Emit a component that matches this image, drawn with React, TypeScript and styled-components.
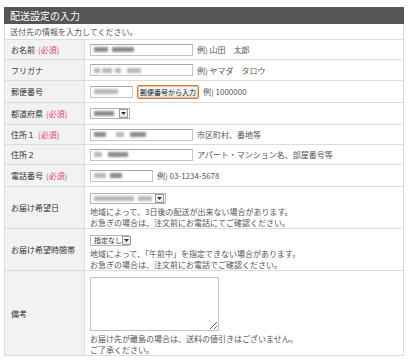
import styled, { createGlobalStyle } from "styled-components";

const GlobalStyle = createGlobalStyle`
  html, body {
    margin: 0;
    padding: 0;
    background: #fff;
  }
  body {
    font-family: "Noto Sans CJK JP", "Noto Sans", sans-serif;
    color: #444;
  }
`;

type Field = {
  label: string;
  required?: boolean;
  height: number;
};

const App: React.FC = () => {
  return (
    <>
      <GlobalStyle />
      <StyledPage>
        <StyledForm>
          <StyledTitle>配送設定の入力</StyledTitle>
          <StyledIntro>送付先の情報を入力してください。</StyledIntro>

          <Row label="お名前" required height={20}>
            <StyledInput $width={103}>
              <Blur $width={14} />
              <Blur $width={22} $gap={4} />
            </StyledInput>
            <StyledHint>例) 山田　太郎</StyledHint>
          </Row>

          <Row label="フリガナ" height={21}>
            <StyledInput $width={103}>
              <Blur $width={6} $light />
              <Blur $width={10} $gap={2} $light />
              <Blur $width={6} $gap={3} $light />
              <Blur $width={14} $gap={6} $light />
            </StyledInput>
            <StyledHint>例) ヤマダ　タロウ</StyledHint>
          </Row>

          <Row label="郵便番号" height={22}>
            <StyledInput $width={43}>
              <Blur $width={24} $light />
            </StyledInput>
            <StyledButton type="button">郵便番号から入力</StyledButton>
            <StyledHint>例) 1000000</StyledHint>
          </Row>

          <Row label="都道府県" required height={22}>
            <Select width={40}>
              <Blur $width={20} />
            </Select>
          </Row>

          <Row label="住所１" required height={20}>
            <StyledInput $width={103}>
              <Blur $width={12} />
              <Blur $width={8} $gap={10} $light />
              <Blur $width={16} $gap={6} />
            </StyledInput>
            <StyledHint>市区町村、番地等</StyledHint>
          </Row>

          <Row label="住所２" height={20}>
            <StyledInput $width={103}>
              <Blur $width={8} $light />
              <Blur $width={20} $gap={6} />
            </StyledInput>
            <StyledHint>アパート・マンション名、部屋番号等</StyledHint>
          </Row>

          <Row label="電話番号" required height={22}>
            <StyledInput $width={63}>
              <Blur $width={12} $light />
              <Blur $width={12} $gap={4} />
            </StyledInput>
            <StyledHint>例) 03-1234-5678</StyledHint>
          </Row>

          <Row label="お届け希望日" height={42} stacked>
            <Select width={76}>
              <Blur $width={40} $light />
              <Blur $width={14} $gap={4} $light />
            </Select>
            <StyledNote>
              地域によって、3日後の配送が出来ない場合があります。
              <br />
              お急ぎの場合は、注文前にお電話にてご確認ください。
            </StyledNote>
          </Row>

          <Row label="お届け希望時間帯" height={42} stacked>
            <Select width={39}>
              <StyledSelectText>指定なし</StyledSelectText>
            </Select>
            <StyledNote>
              地域によって、「午前中」を指定できない場合があります。
              <br />
              お急ぎの場合は、注文前にお電話でご確認ください。
            </StyledNote>
          </Row>

          <Row label="備考" height={84} stacked last>
            <StyledTextarea />
            <StyledNote>
              お届け先が離島の場合は、送料の値引きはございません。
              <br />
              ご了承ください。
            </StyledNote>
          </Row>
        </StyledForm>
      </StyledPage>
    </>
  );
};

const Row: React.FC<
  Field & { children: React.ReactNode; stacked?: boolean; last?: boolean }
> = ({ label, required, height, children, stacked, last }) => (
  <StyledRow $height={height} $last={last}>
    <StyledLabel>
      {label}
      {required && <StyledRequired>(必須)</StyledRequired>}
    </StyledLabel>
    <StyledCell $stacked={stacked}>{children}</StyledCell>
  </StyledRow>
);

const Select: React.FC<{ width: number; children: React.ReactNode }> = ({
  width,
  children,
}) => (
  <StyledSelect $width={width}>
    <StyledSelectValue>{children}</StyledSelectValue>
    <StyledArrow>
      <svg width="5" height="3" viewBox="0 0 5 3">
        <path d="M0 0 H5 L2.5 3 Z" fill="#333" />
      </svg>
    </StyledArrow>
  </StyledSelect>
);

const StyledPage = styled.div`
  padding: 7px 6px 0 4px;
`;

const StyledForm = styled.div`
  width: 400px;
  border: 1px solid #dcdcdc;
  border-top: none;
  box-sizing: border-box;
`;

const StyledTitle = styled.div`
  height: 17px;
  background: #555;
  color: #fff;
  font-size: 10px;
  line-height: 17px;
  padding-left: 6px;
  margin: 0 -1px;
`;

const StyledIntro = styled.div`
  height: 16px;
  line-height: 16px;
  font-size: 8px;
  color: #555;
  padding-left: 5px;
  border-bottom: 1px solid #dcdcdc;
  box-sizing: border-box;
`;

const StyledRow = styled.div<{ $height: number; $last?: boolean }>`
  display: grid;
  grid-template-columns: 80px 1fr;
  height: ${(p) => p.$height}px;
  border-bottom: ${(p) => (p.$last ? "none" : "1px solid #dcdcdc")};
  box-sizing: border-box;
`;

const StyledLabel = styled.div`
  display: flex;
  align-items: center;
  background: #f2f2f2;
  border-right: 1px solid #dcdcdc;
  padding-left: 6px;
  font-size: 8px;
  color: #333;
  white-space: nowrap;
`;

const StyledRequired = styled.span`
  color: #e5407c;
  margin-left: 3px;
`;

const StyledCell = styled.div<{ $stacked?: boolean }>`
  display: flex;
  flex-direction: ${(p) => (p.$stacked ? "column" : "row")};
  align-items: ${(p) => (p.$stacked ? "flex-start" : "center")};
  justify-content: flex-start;
  gap: ${(p) => (p.$stacked ? "2px" : "4px")};
  padding: ${(p) => (p.$stacked ? "6px 0 0 5px" : "0 0 0 5px")};
`;

const StyledInput = styled.div<{ $width: number }>`
  display: flex;
  flex-shrink: 0;
  align-items: center;
  width: ${(p) => p.$width}px;
  height: 12px;
  box-sizing: border-box;
  border: 1px solid #c4c4c4;
  border-top-color: #a8a8a8;
  background: #fff;
  padding-left: 3px;
`;

const Blur = styled.span<{ $width: number; $gap?: number; $light?: boolean }>`
  display: inline-block;
  flex-shrink: 0;
  width: ${(p) => p.$width}px;
  height: 5px;
  margin-left: ${(p) => p.$gap ?? 0}px;
  background: ${(p) => (p.$light ? "#b8b8b8" : "#8c8c8c")};
  filter: blur(1px);
`;

const StyledHint = styled.span`
  font-size: 8px;
  color: #555;
  white-space: nowrap;
`;

const StyledButton = styled.button`
  flex-shrink: 0;
  height: 14px;
  padding: 0 2px;
  font-family: inherit;
  font-size: 7px;
  line-height: 12px;
  color: #222;
  background: linear-gradient(#fafafa, #e4e4e4);
  border: 1px solid #e7721f;
  border-radius: 2px;
  box-shadow: inset 0 0 0 1px #c9c9c9;
  white-space: nowrap;
`;

const StyledSelect = styled.div<{ $width: number }>`
  display: flex;
  flex-shrink: 0;
  align-items: center;
  justify-content: space-between;
  width: ${(p) => p.$width}px;
  height: 11px;
  box-sizing: border-box;
  border: 1px solid #b5b5b5;
  background: #fff;
  padding: 0 1px 0 3px;
`;

const StyledSelectValue = styled.span`
  display: flex;
  align-items: center;
`;

const StyledSelectText = styled.span`
  font-size: 7px;
  color: #333;
  line-height: 9px;
  white-space: nowrap;
`;

const StyledArrow = styled.span`
  display: flex;
  flex-shrink: 0;
  align-items: center;
  justify-content: center;
  width: 7px;
  height: 7px;
  border: 1px solid #9a9a9a;
  background: linear-gradient(#fff, #e6e6e6);
`;

const StyledNote = styled.div`
  font-size: 8px;
  line-height: 11px;
  color: #555;
  white-space: nowrap;
`;

const StyledTextarea = styled.textarea`
  width: 129px;
  height: 54px;
  box-sizing: border-box;
  border: 1px solid #c4c4c4;
  margin: 0;
  padding: 0;
  resize: both;
`;

export default App;
